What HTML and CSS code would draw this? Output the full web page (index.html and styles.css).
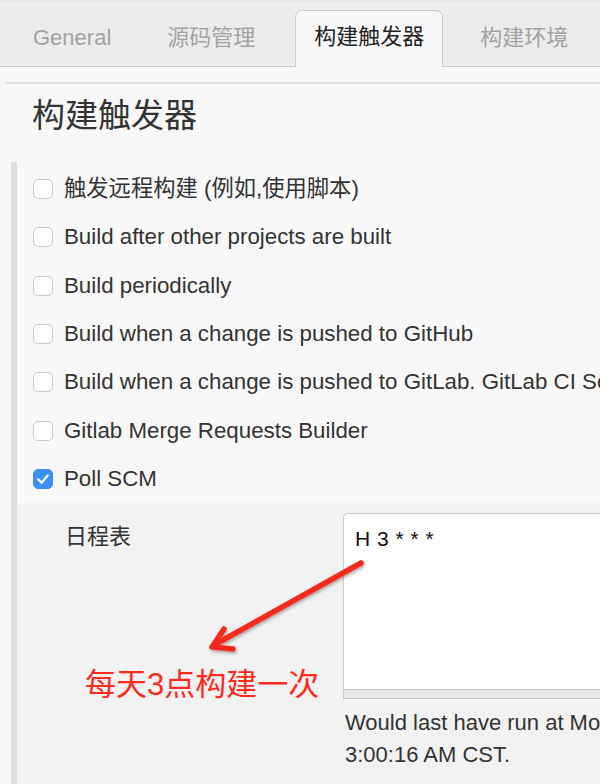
FILE: index.html
```html
<!DOCTYPE html>
<html lang="zh">
<head>
<meta charset="utf-8">
<title>构建触发器</title>
<link rel="stylesheet" href="styles.css">
</head>
<body>
<div class="page">
  <div class="tabbar">
    <div class="tab">General</div>
    <div class="tab">源码管理</div>
    <div class="tab active">构建触发器</div>
    <div class="tab">构建环境</div>
  </div>
  <div class="rule"></div>
  <h1 class="heading">构建触发器</h1>
  <div class="section">
    <div class="rows">
      <label class="row"><span class="cb"></span><span class="lbl">触发远程构建 (例如,使用脚本)</span></label>
      <label class="row"><span class="cb"></span><span class="lbl">Build after other projects are built</span></label>
      <label class="row"><span class="cb"></span><span class="lbl">Build periodically</span></label>
      <label class="row"><span class="cb"></span><span class="lbl">Build when a change is pushed to GitHub</span></label>
      <label class="row"><span class="cb"></span><span class="lbl">Build when a change is pushed to GitLab. GitLab CI Service URL: http://jenkins/project/demo</span></label>
      <label class="row"><span class="cb"></span><span class="lbl">Gitlab Merge Requests Builder</span></label>
      <label class="row"><span class="cb checked"><svg viewBox="0 0 20 20" width="20" height="20"><path d="M5.2 10.4 L8.6 13.8 L14.8 6.4" fill="none" stroke="#fff" stroke-width="2.2" stroke-linecap="round" stroke-linejoin="round"/></svg></span><span class="lbl">Poll SCM</span></label>
    </div>
    <div class="sub">
      <div class="sub-label">日程表</div>
      <div class="sub-field">
        <div class="textarea">H 3 * * *</div>
        <div class="handle"></div>
        <div class="desc"><span class="nowrap">Would last have run at Monday, May 28, 2018 3:00:16 AM CST; would next run at Tuesday, May 29, 2018</span><br>3:00:16 AM CST.</div>
      </div>
    </div>
  </div>
  <svg class="arrow" width="600" height="784" viewBox="0 0 600 784">
    <defs>
      <filter id="sh" x="-20%" y="-20%" width="140%" height="140%">
        <feDropShadow dx="1" dy="2" stdDeviation="1.5" flood-color="#000" flood-opacity="0.3"/>
      </filter>
    </defs>
    <g filter="url(#sh)" stroke="#f52b1f" stroke-width="5.5" stroke-linecap="round" stroke-linejoin="round" fill="none">
      <path d="M361 563 L214 645"/>
      <path d="M224 629 L212 647 L233 649"/>
    </g>
  </svg>
  <div class="note">每天3点构建一次</div>
</div>
</body>
</html>
```
FILE: styles.css
```css
html, body {
  margin: 0;
  padding: 0;
  overflow: hidden;
}
body {
  background: #f8f8f8;
  font-family: "Liberation Sans", Arial, "Noto Sans CJK SC", sans-serif;
  color: #333;
}
.page {
  position: relative;
  width: 600px;
  height: 784px;
  overflow: hidden;
}
.tabbar {
  height: 64px;
  border-top: 2px solid #e4e7df;
  border-bottom: 1px solid #cdcdcd;
  background: #ececec;
  display: flex;
  align-items: flex-end;
  gap: 18px;
  padding-left: 14px;
}
.tab {
  height: 56px;
  line-height: 52px;
  padding: 0 18px;
  font-size: 22px;
  color: #a2a2a2;
  white-space: nowrap;
  margin-bottom: -1px;
  box-sizing: border-box;
  border: 1px solid transparent;
  border-bottom: 0;
}
.tab.active {
  background: #f8f8f8;
  color: #222;
  border-color: #cbcbcb;
  border-radius: 7px 7px 0 0;
  height: 57px;
  margin-left: 3px;
}
.rule {
  height: 2px;
  background: #e2e2e2;
  margin: 15px 0 0 5px;
}
.heading {
  margin: 12px 0 0 32px;
  font-size: 33px;
  line-height: 40px;
  font-weight: normal;
  color: #333;
}
.section {
  margin: 26px 0 0 11px;
  border-left: 6px solid #dedede;
  padding-top: 3px;
  height: 700px;
}
.rows {
  display: flex;
  flex-direction: column;
}
.row {
  height: 48.3px;
  display: flex;
  align-items: center;
  padding-left: 16px;
  gap: 11px;
  white-space: nowrap;
}
.cb {
  width: 20px;
  height: 20px;
  box-sizing: border-box;
  border: 1px solid #c9c9c9;
  border-radius: 5px;
  background: #fff;
  flex: none;
  display: flex;
}
.cb.checked {
  background: #3c8ff5;
  border-color: #3c8ff5;
}
.cb.checked svg {
  margin: -1px;
}
.lbl {
  font-size: 22.3px;
  line-height: 30px;
  color: #333;
}
.sub {
  background: #f2f2f2;
  display: grid;
  grid-template-columns: 326px 300px;
  padding: 10px 0 0 0;
  height: 400px;
}
.sub-label {
  padding-left: 48px;
  margin-top: 8px;
  font-size: 22px;
  line-height: 32px;
  color: #333;
}
.sub-field {
  display: flex;
  flex-direction: column;
}
.textarea {
  height: 177px;
  box-sizing: border-box;
  background: #fff;
  border: 1px solid #c8c8c8;
  border-radius: 5px 0 0 0;
  padding: 13px 0 0 11px;
  font-size: 21px;
  line-height: 24px;
  color: #111;
  word-spacing: 1px;
}
.handle {
  height: 9px;
  box-sizing: border-box;
  background: #e9e9e9;
  border: 1px solid #c6c6c6;
  border-top: 0;
}
.desc {
  margin-top: 8px;
  padding-left: 2px;
  font-size: 22px;
  line-height: 32px;
  color: #333;
}
.nowrap {
  white-space: nowrap;
}
.arrow {
  position: absolute;
  left: 0;
  top: 0;
  pointer-events: none;
}
.note {
  position: absolute;
  left: 85px;
  top: 666px;
  font-size: 31px;
  line-height: 38px;
  color: #fb2b1e;
  white-space: nowrap;
  font-family: "Liberation Sans", "Noto Sans CJK SC", sans-serif;
}
```
